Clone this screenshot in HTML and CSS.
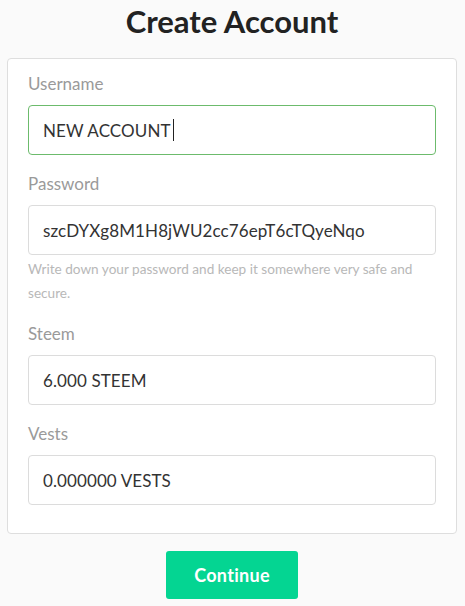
FILE: index.html
```html
<!DOCTYPE html>
<html lang="en">
<head>
<meta charset="utf-8">
<title>Create Account</title>
<link rel="stylesheet" href="styles.css">
</head>
<body>
<main class="page">
  <h1 class="title">Create Account</h1>
  <form class="card">
    <div class="field">
      <label class="label">Username</label>
      <div class="input input--focus"><span>NEW ACCOUNT</span><span class="caret"></span></div>
    </div>
    <div class="field">
      <label class="label">Password</label>
      <div class="input"><span>szcDYXg8M1H8jWU2cc76epT6cTQyeNqo</span></div>
      <p class="help">Write down your password and keep it somewhere very safe and secure.</p>
    </div>
    <div class="field">
      <label class="label">Steem</label>
      <div class="input"><span>6.000 STEEM</span></div>
    </div>
    <div class="field">
      <label class="label">Vests</label>
      <div class="input"><span>0.000000 VESTS</span></div>
    </div>
  </form>
  <div class="actions">
    <button type="button" class="btn">Continue</button>
  </div>
</main>
</body>
</html>
```
FILE: styles.css
```css
* { box-sizing: border-box; }
html, body { margin: 0; padding: 0; }
body {
  background: #fafafa;
  font-family: Lato, "Open Sans", sans-serif;
  color: #333;
}
.page {
  width: 450px;
  margin: 0 0 0 7px;
}
.title {
  margin: 0 0 18px;
  padding-top: 2px;
  font-family: Lato, "Open Sans", sans-serif;
  font-weight: 700;
  font-size: 31px;
  line-height: 38px;
  text-align: center;
  color: #222;
}
.card {
  background: #fff;
  border: 1px solid #dedede;
  border-radius: 4px;
  padding: 13px 20px 28px;
  display: flex;
  flex-direction: column;
  gap: 17px;
}
.field {
  display: flex;
  flex-direction: column;
}
.label {
  font-size: 17px;
  line-height: 24px;
  color: #9a9a9a;
  margin-bottom: 9px;
}
.input {
  height: 50px;
  border: 1px solid #dcdcdc;
  border-radius: 4px;
  padding: 0 14px;
  display: flex;
  align-items: center;
  font-size: 17px;
  letter-spacing: 0.1px;
  color: #333;
  background: #fff;
}
.input--focus {
  border-color: #6cbb6c;
}
.caret {
  display: inline-block;
  width: 1px;
  height: 22px;
  background: #222;
  margin-left: 2px;
}
.help {
  margin: 2px 0 0;
  font-size: 13.6px;
  line-height: 24px;
  color: #b8b8b8;
}
.actions {
  display: flex;
  justify-content: center;
  padding-top: 17px;
}
.btn {
  width: 132px;
  height: 48px;
  border: 0;
  border-radius: 3px;
  background: #04d592;
  color: #fff;
  font-family: Lato, "Open Sans", sans-serif;
  font-weight: 700;
  font-size: 18px;
  letter-spacing: 0.3px;
  cursor: pointer;
}
```
